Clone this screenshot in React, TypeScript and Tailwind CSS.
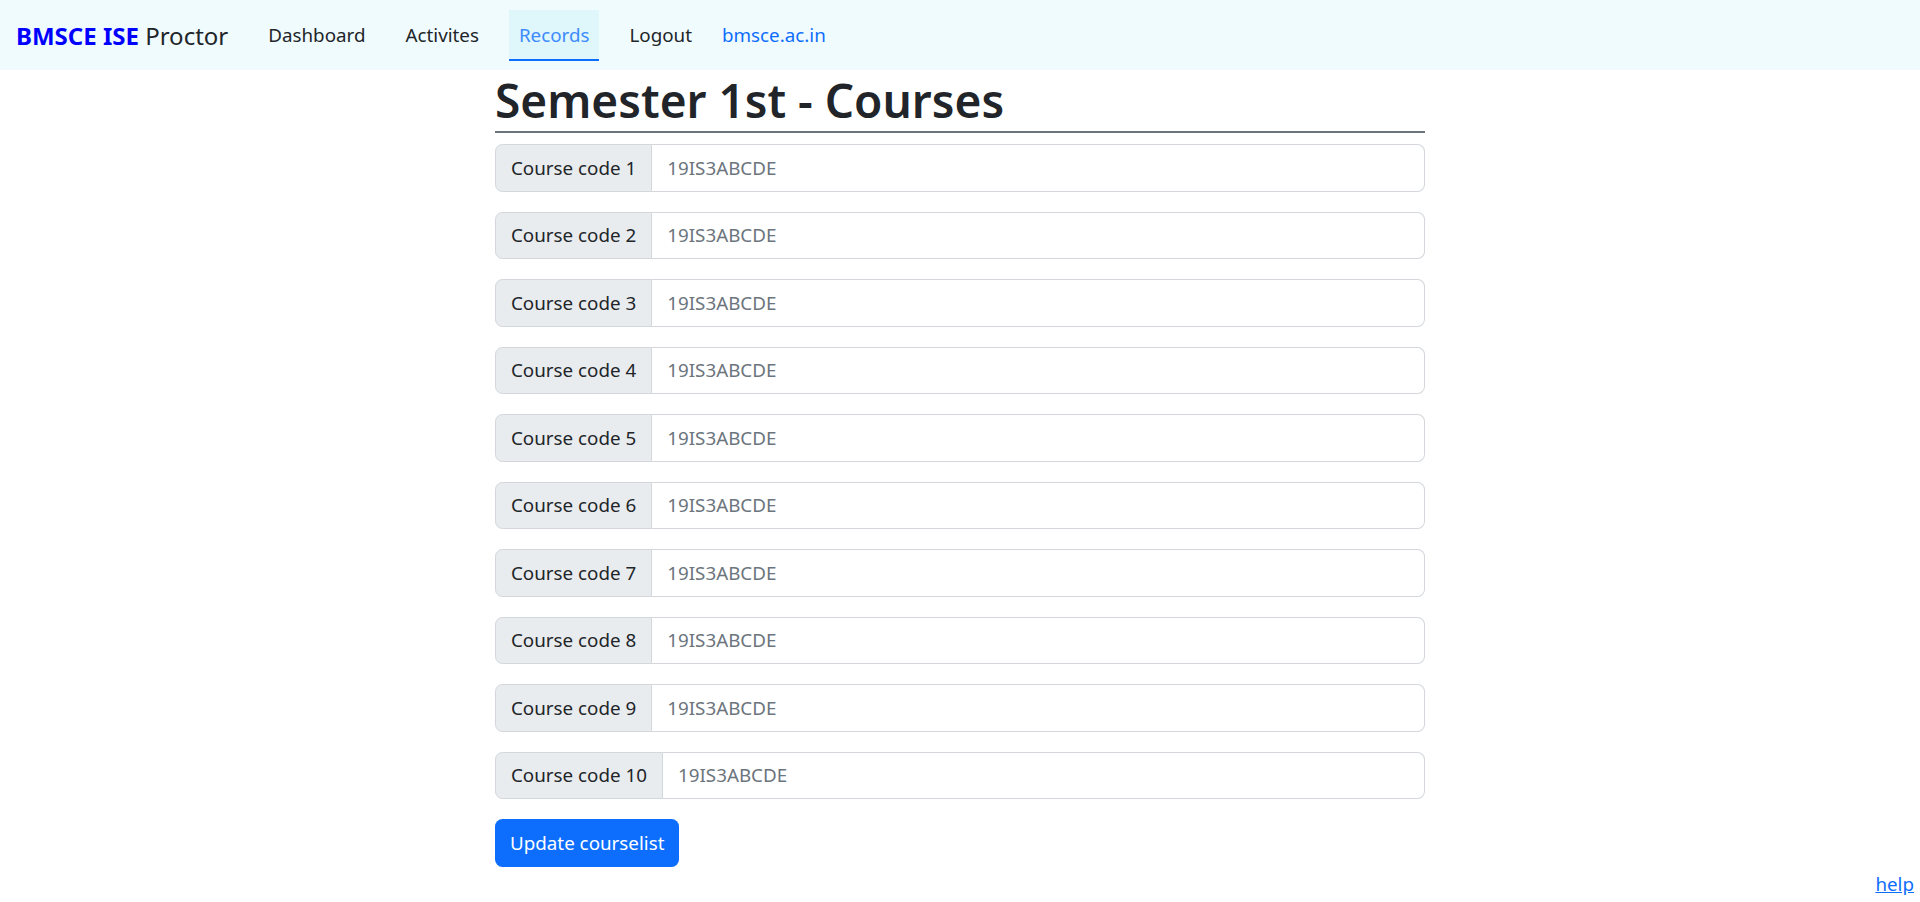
const links = [
  { label: "Dashboard", active: false },
  { label: "Activites", active: false },
  { label: "Records", active: true },
  { label: "Logout", active: false },
]

const codes = Array.from({ length: 10 }, (_, i) => i + 1)

export default function App() {
  return (
    <div className="min-h-[902px] bg-white text-[#212529] font-['Segoe_UI','Noto_Sans',sans-serif] text-[18.8px] leading-[30px]">
      <nav className="h-[70px] bg-[#f0fbfd] flex items-center pl-[16px]">
        <a href="#" className="text-[24px] leading-[37px] mr-[30px] whitespace-nowrap">
          <span className="font-bold text-[#0000ff]">BMSCE ISE</span>{" "}
          <span className="text-[#212529]">Proctor</span>
        </a>
        <ul className="flex items-center gap-[20px]">
          {links.map((l) => (
            <li key={l.label}>
              <a
                href="#"
                className={
                  l.active
                    ? "block px-[10px] pt-[10px] pb-[9px] bg-[#dff6fb] text-[#3d8bfd] border-b-[2px] border-[#0d6efd]"
                    : "block px-[10px] pt-[10px] pb-[11px] text-[#212529]"
                }
              >
                {l.label}
              </a>
            </li>
          ))}
          <li>
            <a href="#" className="block pr-[10px] pt-[10px] pb-[11px] text-[#0d6efd]">
              bmsce.ac.in
            </a>
          </li>
        </ul>
      </nav>

      <main className="w-[930px] mx-auto">
        <h1 className="text-[46px] leading-[61px] font-semibold border-b-[2.5px] border-[#6c757d] mb-[11px]">
          Semester 1st - Courses
        </h1>
        <form>
          {codes.map((n) => (
            <div key={n} className="flex h-[47.5px] mb-[20px]">
              <span className="flex items-center px-[15px] bg-[#e9ecef] border border-[#d3d7dc] rounded-l-[7.5px] whitespace-nowrap">
                Course code {n}
              </span>
              <input
                type="text"
                placeholder="19IS3ABCDE"
                className="flex-1 min-w-0 px-[15px] border border-l-0 border-[#d3d7dc] rounded-r-[7.5px] bg-white outline-none placeholder:text-[#6c757d]"
              />
            </div>
          ))}
          <button
            type="button"
            className="h-[47.5px] px-[15px] bg-[#0d6efd] text-white rounded-[7.5px]"
          >
            Update courselist
          </button>
        </form>
      </main>

      <div className="text-right pr-[6px] mt-[2px]">
        <a href="#" className="text-[#0d6efd] underline">
          help
        </a>
      </div>
    </div>
  )
}
